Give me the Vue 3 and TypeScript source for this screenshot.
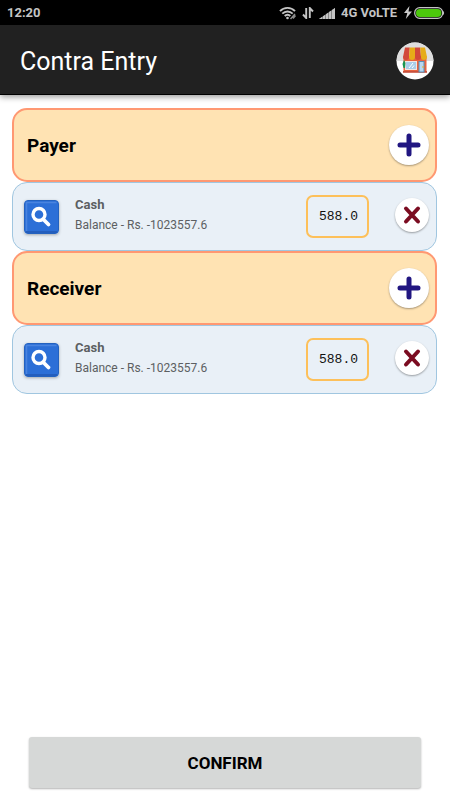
<script setup lang="ts">
import { ref } from 'vue'

interface Entry {
  id: string
  account: string
  balance: string
  amount: string
}

interface Section {
  title: string
  entries: Entry[]
}

const sections = ref<Section[]>([
  { title: 'Payer', entries: [{ id: 'payer-1', account: 'Cash', balance: '-1023557.6', amount: '588.0' }] },
  { title: 'Receiver', entries: [{ id: 'receiver-1', account: 'Cash', balance: '-1023557.6', amount: '588.0' }] },
])

let nextId = 2

function addEntry(section: Section): void {
  section.entries.push({
    id: `${section.title.toLowerCase()}-${nextId++}`,
    account: 'Cash',
    balance: '-1023557.6',
    amount: '0.0',
  })
}

function removeEntry(section: Section, id: string): void {
  section.entries = section.entries.filter((entry) => entry.id !== id)
}
</script>

<template>
  <div class="screen">
    <div class="status">
      <span class="clock">12:20</span>
      <div class="signals">
        <svg class="wifi" width="18" height="14" viewBox="0 0 18 14" fill="none" stroke="#c4c4c4">
          <path d="M1 5.2C5 .8 12 .8 16 5.2" stroke-width="1.9" />
          <path d="M3.3 7.7c3-3 7.400-3 10.400 0" stroke-width="1.9" />
          <path d="M5.700 10c1.700-1.700 4-1.700 5.600 0" stroke-width="1.900" />
          <circle cx="8.500" cy="12" r="1.300" fill="#c4c4c4" stroke="none" />
          <path d="M11.500 13l4.500-5M14 12.500l2.500-3" stroke="#8a8a8a" stroke-width="1.500" />
        </svg>
        <svg class="arrows" width="12" height="12" viewBox="0 0 12 12" fill="none" stroke="#c4c4c4" stroke-width="1.900">
          <path d="M4.200 1v10L1 7.500M7.800 11V1L11 4.500" />
        </svg>
        <svg class="bars" width="17" height="12" viewBox="0 0 17 12">
          <path d="M0 12L16 1v11z" fill="#858585" />
          <path d="M0 12L3 9.900V12zM4 9.300L6 7.900V12H4zM7 7.200l2-1.400V12H7zM10 5.100l2-1.400V12h-2zM13 3.100l3-2.100v11h-3z" fill="#c4c4c4" />
        </svg>
        <span class="network">4G VoLTE</span>
        <svg class="bolt" width="8" height="13" viewBox="0 0 8 13" fill="#c9c9c9">
          <path d="M5.500 0L0 7h3.300L1.800 13 8 5.400H4.500z" />
        </svg>
        <svg class="battery" width="31" height="12" viewBox="0 0 31 12">
          <rect x=".7" y=".7" width="28" height="10.600" rx="5" fill="#111" stroke="#c4c4c4" stroke-width="1.200" />
          <rect x="2" y="2" width="25.400" height="8" rx="4" fill="#4cc80c" />
          <path d="M29 4c1.500.8 1.500 3.200 0 4z" fill="#c4c4c4" />
        </svg>
      </div>
    </div>

    <header class="appbar">
      <h1>Contra Entry</h1>
      <button class="store" type="button" aria-label="Store">
        <svg width="38" height="38" viewBox="0 0 38 38">
          <circle cx="19" cy="19" r="18.500" fill="#fff" />
          <path d="M.5 19a18.500 18.500 0 0 1 37 0z" fill="#dedede" />
          <rect x="7.500" y="14" width="23" height="16" fill="#e8633f" />
          <path d="M7 29h24v1.800H7z" fill="#c9503c" />
          <path d="M9 5.500h4.800L13 15a3 3 0 0 1-6 0z" fill="#d2483a" />
          <path d="M13.800 5.500H19V15a3 3 0 0 1-6 0z" fill="#e6ac18" />
          <path d="M19 5.500h5.200L25 15a3 3 0 0 1-6 0z" fill="#d2483a" />
          <path d="M24.200 5.500H29l2 9.500a3 3 0 0 1-6 0z" fill="#e6ac18" />
          <rect x="9.500" y="19.500" width="11" height="8" fill="#a9cdea" stroke="#f2e6e2" />
          <path d="M13 26l4-5M16 26l2-2.500" stroke="#fff" />
          <rect x="23" y="19.500" width="5" height="10.500" fill="#b8d7f0" stroke="#568fb8" />
          <path d="M27 24v2" stroke="#e7b126" />
          <path d="M8 18l1.500 3-.5 5H7.500L6.500 22z" fill="#169653" />
        </svg>
      </button>
    </header>

    <main class="content">
      <section v-for="section in sections" :key="section.title">
        <div class="group">
          <h2>{{ section.title }}</h2>
          <button class="round add" type="button" :aria-label="`Add ${section.title}`" @click="addEntry(section)">
            <svg width="24" height="24" viewBox="0 0 24 24" stroke="#211681" stroke-width="5" stroke-linecap="round">
              <path d="M12 3v18M3 12h18" />
            </svg>
          </button>
        </div>
        <div v-for="entry in section.entries" :key="entry.id" class="entry">
          <button class="search" type="button" aria-label="Search account">
            <svg width="35" height="34" viewBox="0 0 35 34" fill="none">
              <rect x=".5" y=".5" width="34" height="33" rx="3.500" fill="#2c6fd7" stroke="#2462bf" />
              <path d="M2.500 31V2.500h30" stroke="#4a84df" stroke-width="1.500" />
              <path d="M2 32h31" stroke="#2259b5" stroke-width="1.500" />
              <circle cx="15" cy="14.500" r="6" stroke="#fff" stroke-width="3.400" />
              <path d="M19.500 19.500l5 5" stroke="#fff" stroke-width="3.800" stroke-linecap="round" />
            </svg>
          </button>
          <div class="details">
            <label :for="entry.id">{{ entry.account }}</label>
            <p>Balance - Rs. {{ entry.balance }}</p>
          </div>
          <input :id="entry.id" v-model="entry.amount" class="amount" type="text" inputmode="decimal" />
          <button class="round remove" type="button" aria-label="Remove entry" @click="removeEntry(section, entry.id)">
            <svg width="18" height="20" viewBox="0 0 18 20" stroke="#7b0c21" stroke-width="4" stroke-linecap="round">
              <path d="M3 3.500l12 13M15 3.500l-12 13" />
            </svg>
          </button>
        </div>
      </section>
    </main>

    <footer class="footer">
      <button class="confirm" type="button">CONFIRM</button>
    </footer>
  </div>
</template>

<style>
body {
  margin: 0;
  background: #fff;
}
</style>

<style scoped>
.screen {
  display: flex;
  flex-direction: column;
  min-height: 100vh;
  font-family: Roboto, "Liberation Sans", sans-serif;
}

.screen * {
  box-sizing: border-box;
}

button {
  padding: 0;
  border: 0;
  background: none;
  font-family: inherit;
  cursor: pointer;
}

button svg {
  display: block;
}

h1,
h2,
p {
  margin: 0;
}

.status {
  display: flex;
  align-items: center;
  justify-content: space-between;
  height: 25px;
  padding: 0 5px 0 7px;
  background: #000;
  color: #c4c4c4;
  font-size: 13px;
  font-weight: 700;
}

.signals {
  display: flex;
  align-items: center;
  gap: 5px;
}

.bolt {
  margin-left: 2px;
}

.battery {
  margin-left: -3px;
}

.appbar {
  display: flex;
  align-items: center;
  justify-content: space-between;
  height: 70px;
  padding: 3px 16px 0 20px;
  border-bottom: 1px solid #000;
  background: #212121;
  box-shadow: 0 2px 6px rgba(0, 0, 0, 0.4);
}

h1 {
  color: #fff;
  font-size: 25px;
  font-weight: 400;
}

.store {
  border-radius: 50%;
}

.content {
  flex: 1;
  padding: 13px 13px 13px 12px;
}

.group,
.entry {
  display: flex;
  align-items: center;
  border-radius: 15px;
}

.group {
  justify-content: space-between;
  height: 74px;
  padding: 0 6px 0 13px;
  border: 2px solid #ff9872;
  background: #ffe3b3;
}

h2 {
  color: #000;
  font-size: 19px;
  font-weight: 700;
}

.round {
  display: flex;
  align-items: center;
  justify-content: center;
  border-radius: 50%;
  background: #fff;
  box-shadow: 0 1px 2px rgba(0, 0, 0, 0.35);
}

.add {
  width: 40px;
  height: 40px;
}

.remove {
  width: 34px;
  height: 34px;
  margin: 0 0 4px 26px;
}

.entry {
  height: 69px;
  padding: 0 7px 0 11px;
  border: 1px solid #a0c6e0;
  background: #e9f0f7;
}

.search {
  border-radius: 4px;
  box-shadow: 0 1px 3px rgba(0, 0, 0, 0.3);
}

.details {
  display: flex;
  flex: 1;
  flex-direction: column;
  gap: 4px;
  min-width: 0;
  padding: 0 0 3px 16px;
  color: #5c5f62;
  line-height: 16px;
}

.details label {
  font-size: 13px;
  font-weight: 700;
}

.details p {
  font-size: 12px;
}

.amount {
  width: 63px;
  height: 43px;
  padding: 0 8px 0 11px;
  border: 2px solid #fdc05a;
  border-radius: 7px;
  background: transparent;
  color: #111;
  font-family: "Liberation Mono", monospace;
  font-size: 13px;
}

.footer {
  display: flex;
  padding: 0 29px 12px;
}

.confirm {
  flex: 1;
  height: 51px;
  border-radius: 3px;
  background: #d6d8d7;
  box-shadow: 0 1px 2px rgba(0, 0, 0, 0.3);
  color: #000;
  font-size: 17px;
  font-weight: 700;
}
</style>
